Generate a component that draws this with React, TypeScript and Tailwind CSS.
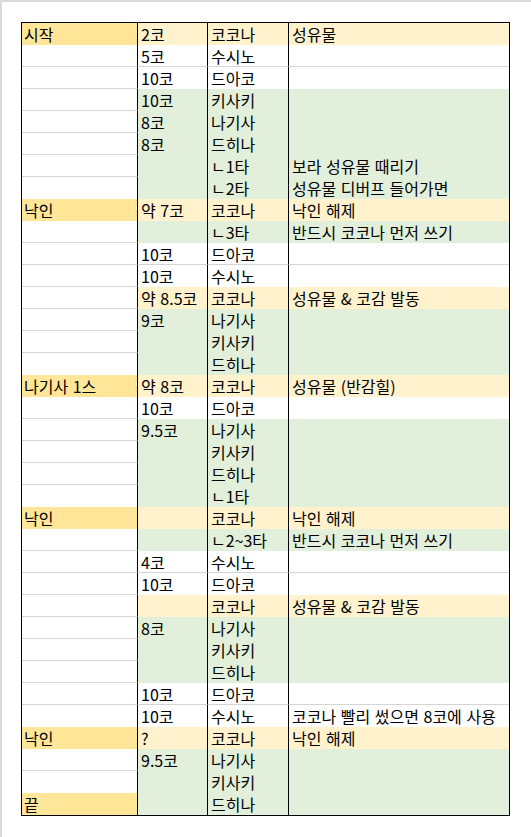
import React from "react";

type Row = [string, string, string, string, "y" | "g" | "w"];

const rows: Row[] = [
  ["시작", "2코", "코코나", "성유물", "y"],
  ["", "5코", "수시노", "", "w"],
  ["", "10코", "드아코", "", "w"],
  ["", "10코", "키사키", "", "g"],
  ["", "8코", "나기사", "", "g"],
  ["", "8코", "드히나", "", "g"],
  ["", "", "ㄴ1타", "보라 성유물 때리기", "g"],
  ["", "", "ㄴ2타", "성유물 디버프 들어가면", "g"],
  ["낙인", "약 7코", "코코나", "낙인 해제", "y"],
  ["", "", "ㄴ3타", "반드시 코코나 먼저 쓰기", "g"],
  ["", "10코", "드아코", "", "w"],
  ["", "10코", "수시노", "", "w"],
  ["", "약 8.5코", "코코나", "성유물 & 코감 발동", "y"],
  ["", "9코", "나기사", "", "g"],
  ["", "", "키사키", "", "g"],
  ["", "", "드히나", "", "g"],
  ["나기사 1스", "약 8코", "코코나", "성유물 (반감힐)", "y"],
  ["", "10코", "드아코", "", "w"],
  ["", "9.5코", "나기사", "", "g"],
  ["", "", "키사키", "", "g"],
  ["", "", "드히나", "", "g"],
  ["", "", "ㄴ1타", "", "g"],
  ["낙인", "", "코코나", "낙인 해제", "y"],
  ["", "", "ㄴ2~3타", "반드시 코코나 먼저 쓰기", "g"],
  ["", "4코", "수시노", "", "w"],
  ["", "10코", "드아코", "", "w"],
  ["", "", "코코나", "성유물 & 코감 발동", "y"],
  ["", "8코", "나기사", "", "g"],
  ["", "", "키사키", "", "g"],
  ["", "", "드히나", "", "g"],
  ["", "10코", "드아코", "", "w"],
  ["", "10코", "수시노", "코코나 빨리 썼으면 8코에 사용", "w"],
  ["낙인", "?", "코코나", "낙인 해제", "y"],
  ["", "9.5코", "나기사", "", "g"],
  ["", "", "키사키", "", "g"],
  ["끝", "", "드히나", "", "g"],
];

function col1White(i: number) {
  return rows[i] && rows[i][0] === "";
}
function restWhite(i: number) {
  return rows[i] && rows[i][4] === "w";
}

function restBg(t: string) {
  if (t === "y") return "bg-[#fff2cc]";
  if (t === "g") return "bg-[#e2efda]";
  return "bg-white";
}

const cell =
  "h-[22px] leading-[22px] text-[16px] whitespace-nowrap box-border [word-spacing:1px]";
const lineB = "border-b border-b-[#d4d4d4]";

export default function App() {
  return (
    <div className="w-[531px] h-[837px] bg-white border-t-2 border-l-2 border-[#dadada] pl-[19px] pt-[20px] text-black font-['Noto_Sans_CJK_KR','Noto_Sans',sans-serif]">
      <div className="flex flex-col w-[489px] border border-black">
        {rows.map((r, i) => {
          const c1w = col1White(i);
          const c1Line = c1w && col1White(i + 1);
          const t = r[4];
          const rest = restBg(t);
          const restLine = t === "w" && restWhite(i + 1);
          return (
            <div key={i} className="flex">
              <div
                className={`${cell} w-[116px] pl-[2px] border-r border-r-black ${
                  c1w ? "bg-white" : "bg-[#ffe699]"
                } ${c1Line ? lineB : ""}`}
              >
                {r[0]}
              </div>
              <div
                className={`${cell} w-[70px] pl-[3px] border-r border-r-black ${rest} ${
                  restLine ? lineB : ""
                }`}
              >
                {r[1]}
              </div>
              <div
                className={`${cell} w-[81px] pl-[3px] border-r border-r-black ${rest} ${
                  restLine ? lineB : ""
                }`}
              >
                {r[2]}
              </div>
              <div className={`${cell} w-[220px] pl-[3px] ${rest} ${restLine ? lineB : ""}`}>
                {r[3]}
              </div>
            </div>
          );
        })}
      </div>
    </div>
  );
}
